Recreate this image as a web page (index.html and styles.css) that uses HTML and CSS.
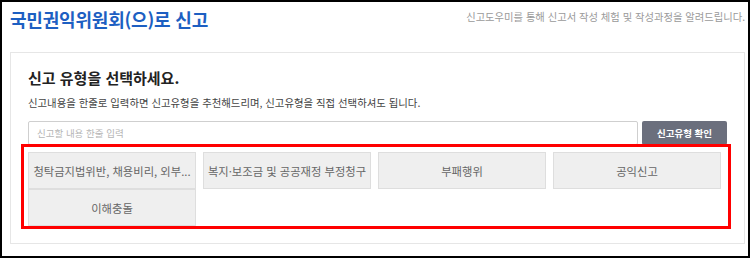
FILE: index.html
```html
<!DOCTYPE html>
<html lang="ko">
<head>
<meta charset="utf-8">
<title>국민권익위원회(으)로 신고</title>
<link rel="stylesheet" href="styles.css">
</head>
<body>
<div class="frame">
  <header class="top">
    <h1 class="title">국민권익위원회(으)로 신고</h1>
    <p class="intro">신고도우미를 통해 신고서 작성 체험 및 작성과정을 알려드립니다.</p>
  </header>
  <section class="card">
    <h2 class="card-title">신고 유형을 선택하세요.</h2>
    <p class="card-desc">신고내용을 한줄로 입력하면 신고유형을 추천해드리며, 신고유형을 직접 선택하셔도 됩니다.</p>
    <div class="search">
      <input class="search-input" type="text" placeholder="신고할 내용 한줄 입력">
      <button class="search-btn" type="button">신고유형 확인</button>
    </div>
    <div class="types">
      <button class="type" type="button">청탁금지법위반, 채용비리, 외부...</button>
      <button class="type" type="button">복지·보조금 및 공공재정 부정청구</button>
      <button class="type" type="button">부패행위</button>
      <button class="type" type="button">공익신고</button>
      <button class="type" type="button">이해충돌</button>
    </div>
    <div class="highlight"></div>
  </section>
</div>
</body>
</html>
```
FILE: styles.css
```css
* { box-sizing: border-box; }
html, body { margin: 0; padding: 0; background: #fff; }
body {
  font-family: "Noto Sans CJK KR", "Noto Sans", sans-serif;
  color: #333;
}
.frame {
  width: 750px;
  height: 258px;
  border: 2px solid #000;
  padding: 0 3px 0 8px;
  overflow: hidden;
}
.top {
  display: flex;
  justify-content: space-between;
  align-items: flex-start;
  height: 50px;
  padding-top: 7px;
}
.title {
  margin: 0;
  font-size: 18px;
  line-height: 20px;
  font-weight: 700;
  color: #1d5fc2;
  letter-spacing: -0.2px;
}
.intro {
  margin: 1px 0 0;
  font-size: 10.3px;
  line-height: 14px;
  color: #9a9a9a;
}
.card {
  position: relative;
  width: 735px;
  border: 1px solid #e6e6e6;
  padding: 15px 17px 17px;
}
.card-title {
  margin: 0;
  font-size: 15px;
  line-height: 20px;
  font-weight: 700;
  color: #222;
}
.card-desc {
  margin: 8px 0 0;
  font-size: 10.4px;
  line-height: 14px;
  color: #444;
}
.search {
  display: flex;
  gap: 4px;
  margin-top: 11px;
  height: 24px;
}
.search-input {
  flex: 1;
  height: 24px;
  margin: 0;
  border: 1px solid #cfcfcf;
  border-radius: 2px;
  padding: 0 8px;
  font-family: inherit;
  font-size: 9.5px;
  color: #333;
  outline: none;
}
.search-input::placeholder { color: #b5b5b5; }
.search-btn {
  width: 85px;
  height: 24px;
  margin: 0;
  border: 0;
  border-radius: 2px;
  background: #6b6f7d;
  color: #fff;
  font-family: inherit;
  font-size: 9.5px;
  font-weight: 700;
  padding: 0;
}
.types {
  display: grid;
  grid-template-columns: repeat(4, 168px);
  grid-auto-rows: 37px;
  column-gap: 7px;
  margin-top: 7px;
}
.type {
  margin: 0;
  padding: 0;
  border: 1px solid #dedede;
  background: #efefef;
  color: #666;
  font-family: inherit;
  font-size: 11.3px;
  white-space: nowrap;
  overflow: hidden;
}
.highlight {
  position: absolute;
  left: 10px;
  top: 91px;
  width: 710px;
  height: 85px;
  border: 3px solid #ff0000;
  pointer-events: none;
}
```
